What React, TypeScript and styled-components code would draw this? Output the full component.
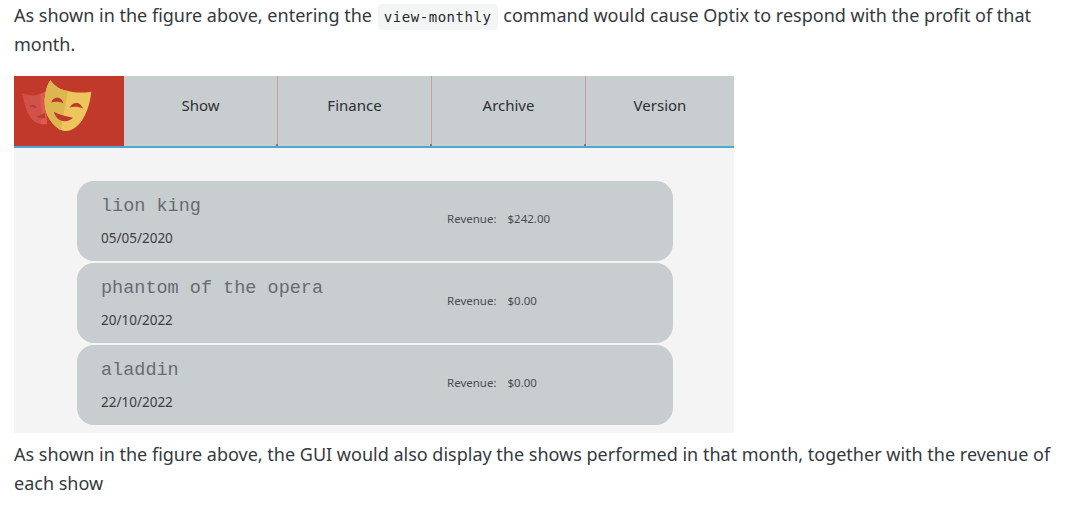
import styled, { createGlobalStyle } from "styled-components";

const GlobalStyle = createGlobalStyle`
  html, body {
    margin: 0;
    background: #fff;
    font-family: "Noto Sans", "Open Sans", sans-serif;
    color: #24292e;
  }
`;

const Page = styled.div`
  width: 1072px;
  height: 519px;
  overflow: hidden;
  padding: 0 14px;
  box-sizing: border-box;
`;

const Para = styled.p<{ $top: number; $bottom: number }>`
  margin: ${(p) => p.$top}px 0 ${(p) => p.$bottom}px;
  font-size: 18px;
  line-height: 28.8px;
  color: #34393e;
`;

const Code = styled.code`
  font-family: "DejaVu Sans Mono", monospace;
  font-size: 14px;
  line-height: 1;
  letter-spacing: 0.56px;
  color: #24292e;
  background: #f3f4f4;
  border-radius: 4px;
  padding: 5px 6px;
  margin: 0 1px;
`;

const Figure = styled.div`
  width: 720px;
  height: 357px;
  background: #f4f4f4;
`;

const Nav = styled.div`
  display: flex;
  height: 72px;
  box-sizing: border-box;
  border-bottom: 2px solid #4ba8cf;
`;

const LogoBox = styled.div`
  width: 110px;
  background: #c0392b;
  flex: none;
`;

const Tab = styled.div<{ $last?: boolean }>`
  position: relative;
  flex: ${(p) => (p.$last ? "1" : "none")};
  width: ${(p) => (p.$last ? "auto" : "154px")};
  box-sizing: border-box;
  padding-bottom: 12px;
  display: flex;
  align-items: center;
  justify-content: center;
  background: #c8cdd0;
  border-right: ${(p) => (p.$last ? "none" : "1px solid #bfa3a3")};
  font-size: 15px;
  color: #2c3033;

  &::after {
    content: "";
    display: ${(p) => (p.$last ? "none" : "block")};
    position: absolute;
    right: -2px;
    bottom: 0;
    width: 3px;
    height: 2px;
    background: #8a7474;
  }
`;

const List = styled.div`
  display: flex;
  flex-direction: column;
  gap: 2px;
  padding: 33px 0 0 63px;
`;

const Card = styled.div`
  width: 596px;
  height: 80px;
  box-sizing: border-box;
  padding-bottom: 4px;
  background: #c8cdd0;
  border-radius: 17px;
  display: grid;
  grid-template-columns: 370px 1fr;
  align-items: center;
`;

const Info = styled.div`
  display: flex;
  flex-direction: column;
  padding: 6px 0 0 24px;
`;

const Title = styled.div`
  font-family: "Liberation Mono", monospace;
  font-size: 18.5px;
  line-height: 20px;
  color: #686c70;
`;

const ShowDate = styled.div`
  margin-top: 12px;
  font-size: 13.5px;
  line-height: 18px;
  color: #3c4043;
`;

const Revenue = styled.div`
  display: flex;
  gap: 11px;
  font-size: 11.5px;
  color: #4a4d50;
`;

function Masks() {
  return (
    <svg width="110" height="70" viewBox="0 0 110 70" style={{ display: "block" }}>
      <path d="M8 17.3 C15 20 21 20 26 18 L27 48.3 C20 47 15 41 12.3 33 C10 27 9 22 8 17.3Z" fill="#d1524a" />
      <path d="M26 18 C28 17 30 16 32 15 L33 48.3 L27 48.3Z" fill="#e0594e" />
      <path d="M15.7 31 C17 28 21 28 23 32 C20 31 18 31 15.7 31Z" fill="#b8402f" />
      <path d="M22 41 C25 39 28 38 31 37 L31 42 C28 43 25 42 22 41Z" fill="#b8402f" />
      <path d="M36.3 4.3 C41 11 47 14 54 15 C62 17 70 17 77.3 15.7 C76 29 71 44 62 51 C56 56 50 56 45 53 C35 46 30 36 30.7 23 C31.5 15 33 9 36.3 4.3Z" fill="#eec55c" />
      <path d="M36.3 4.3 C41 11 47 14 54 15 L46.7 54 C46 53.6 45.5 53.3 45 53 C35 46 30 36 30.7 23 C31.5 15 33 9 36.3 4.3Z" fill="#ddb650" />
      <path d="M37.3 26.5 C38.5 21 47 19 49.5 27.3 C45 25.5 41 25.5 37.3 26.5Z" fill="#c0392b" />
      <path d="M55.7 31.5 C58 26 66 24.5 69 32.7 C65 30.5 60 30.5 55.7 31.5Z" fill="#c0392b" />
      <path d="M39.7 35.7 C46 39 53 40.5 59 41.7 C54 47 43 47 39.7 35.7Z" fill="#c0392b" />
    </svg>
  );
}

const shows = [
  { title: "lion king", date: "05/05/2020", revenue: "$242.00" },
  { title: "phantom of the opera", date: "20/10/2022", revenue: "$0.00" },
  { title: "aladdin", date: "22/10/2022", revenue: "$0.00" },
];

export default function App() {
  return (
    <Page>
      <GlobalStyle />
      <Para $top={1} $bottom={17.4}>
        As shown in the figure above, entering the <Code>view-monthly</Code> command would cause Optix to respond with the profit of that month.
      </Para>
      <Figure>
        <Nav>
          <LogoBox>
            <Masks />
          </LogoBox>
          <Tab>Show</Tab>
          <Tab>Finance</Tab>
          <Tab>Archive</Tab>
          <Tab $last>Version</Tab>
        </Nav>
        <List>
          {shows.map((show) => (
            <Card key={show.title}>
              <Info>
                <Title>{show.title}</Title>
                <ShowDate>{show.date}</ShowDate>
              </Info>
              <Revenue>
                <span>Revenue:</span>
                <span>{show.revenue}</span>
              </Revenue>
            </Card>
          ))}
        </List>
      </Figure>
      <Para $top={7} $bottom={0}>
        As shown in the figure above, the GUI would also display the shows performed in that month, together with the revenue of each show
      </Para>
    </Page>
  );
}
